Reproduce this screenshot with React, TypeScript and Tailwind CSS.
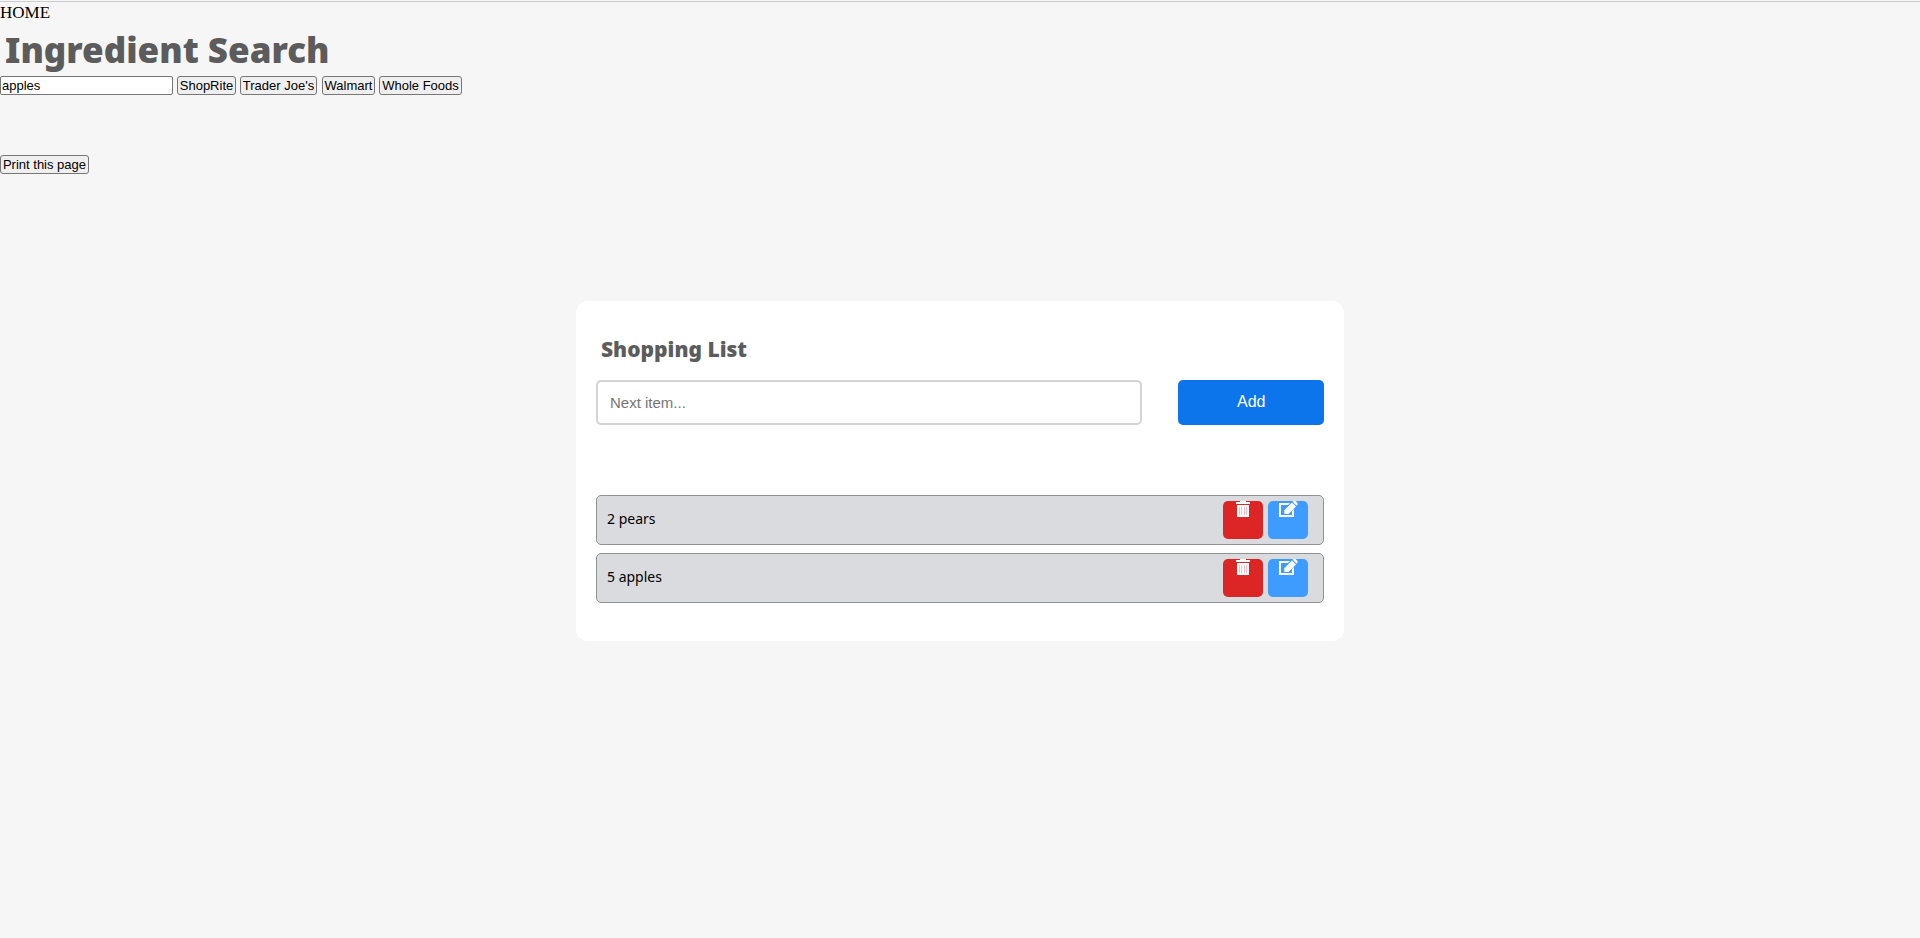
import { useState } from "react";

const stores = [
  { name: "ShopRite", width: "w-[59px] mr-1" },
  { name: "Trader Joe's", width: "w-[77px] mr-[5px]" },
  { name: "Walmart", width: "w-[53px] mr-1" },
  { name: "Whole Foods", width: "w-[83px]" },
];

const items = ["2 pears", "5 apples"];

const plainButton =
  "h-[19px] whitespace-nowrap rounded-[3px] border border-[#767676] bg-[#efefef] text-[13px] leading-[17px] text-black";

function TrashIcon() {
  return (
    <svg aria-hidden="true" viewBox="0 0 14 16" className="h-4 w-3.5" fill="#fff">
      <path d="M4 0h6v1h4v2H0V1h4z" />
      <path d="M1 4h12v12H1z" />
      <path d="M3 6h1v8H3zM5 6h1v8H5zM8 6h1v8H8zM10 6h1v8h-1z" fill="#f3bfc4" />
    </svg>
  );
}

function EditIcon() {
  return (
    <svg aria-hidden="true" viewBox="0 0 19 16" className="h-4 w-[19px]" fill="#fff">
      <path d="M0 2h11L9 4H2v10h11v-4l2-2v8H0z" />
      <path d="M13 1.500l4 4-7.500 7.500H5.300V9.200z" />
      <path d="M13.700.8L14.500 0h2l2 2v1.200L17.600 4.700z" />
    </svg>
  );
}

export default function App() {
  const [query, setQuery] = useState("apples");
  const [next, setNext] = useState("");

  return (
    <div className="min-h-screen bg-[#f6f6f6] pt-px font-['Liberation_Sans',sans-serif] text-black">
      <header className="border-t border-[#cccccc]">
        <nav className="h-[22px] font-['Liberation_Serif',serif] text-[17px] leading-[22px]">
          <a href="#home">HOME</a>
        </nav>
        <h1 className="px-[5px] font-['Noto_Sans',sans-serif] text-[35px] font-black leading-[52px] text-[#5c5c5c]">
          Ingredient Search
        </h1>
      </header>

      <div className="flex">
        <input
          aria-label="Ingredient"
          value={query}
          onChange={(e) => setQuery(e.target.value)}
          className="mr-1 h-[19px] w-[173px] rounded-[2px] border border-[#767676] bg-white px-px text-[13px] leading-[17px]"
        />
        {stores.map((s) => (
          <button key={s.name} type="button" className={`${plainButton} ${s.width}`}>
            {s.name}
          </button>
        ))}
      </div>
      <button
        type="button"
        onClick={() => window.print()}
        className={`${plainButton} mt-[60px] block w-[89px]`}
      >
        Print this page
      </button>

      <main className="mx-auto mt-[127px] w-2/5 rounded-xl bg-white px-5 pb-[38px] pt-[30px]">
        <h2 className="px-[5px] font-['Noto_Sans',sans-serif] text-[21px] font-black leading-9 text-[#5c5c5c]">
          Shopping List
        </h2>
        <form
          className="mt-[13px] flex justify-between"
          onSubmit={(e) => e.preventDefault()}
        >
          <input
            aria-label="Next item"
            placeholder="Next item..."
            value={next}
            onChange={(e) => setNext(e.target.value)}
            className="h-[45px] w-3/4 rounded-[5px] border-2 border-[#d3d3d3] bg-white px-3 text-[15px] placeholder:text-[#757575]"
          />
          <button
            type="submit"
            className="h-[45px] w-1/5 rounded-[5px] bg-[#0d75ec] pb-0.5 text-base text-white"
          >
            Add
          </button>
        </form>

        <ul className="mt-[70px] flex flex-col gap-2">
          {items.map((item) => (
            <li
              key={item}
              className="flex h-[50px] items-center justify-between rounded-[5px] border border-[#919294] bg-[#dadbdf] pl-2.5 pr-[15px]"
            >
              <span className="pb-0.5 font-['Noto_Sans',sans-serif] text-sm">{item}</span>
              <span className="flex gap-[5px]">
                <button
                  type="button"
                  aria-label={`Delete ${item}`}
                  className="flex h-[38px] w-10 justify-center rounded-[5px] bg-[#dc2626]"
                >
                  <TrashIcon />
                </button>
                <button
                  type="button"
                  aria-label={`Edit ${item}`}
                  className="flex h-[38px] w-10 justify-center rounded-[5px] bg-[#3e9bff]"
                >
                  <EditIcon />
                </button>
              </span>
            </li>
          ))}
        </ul>
      </main>
    </div>
  );
}
